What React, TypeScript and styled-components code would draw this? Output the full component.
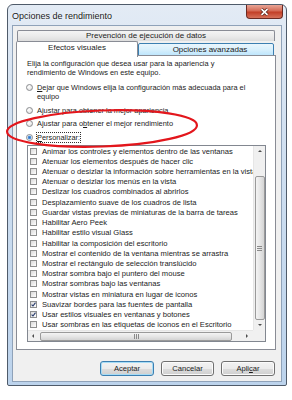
import React from "react";
import styled, { createGlobalStyle } from "styled-components";

const GlobalStyle = createGlobalStyle`
  body {
    margin: 0;
    background: #ffffff;
    font-family: "Liberation Sans", Arial, sans-serif;
    color: #1b1b1b;
  }
`;

const Page = styled.div`
  position: relative;
  width: 292px;
  height: 400px;
  box-sizing: border-box;
  padding: 4px 0 0 7px;
  overflow: hidden;
`;

const Window = styled.div`
  width: 280px;
  height: 382px;
  box-sizing: border-box;
  border: 1px solid #4f5b6a;
  border-radius: 6px 6px 2px 2px;
  background: linear-gradient(180deg, #e3ebf5 0%, #d3e1f1 30%, #bcd3ec 100%);
  display: flex;
  flex-direction: column;
  padding: 0 4px 3px 4px;
`;

const TitleBar = styled.div`
  height: 20px;
  display: flex;
  align-items: flex-start;
  margin: 0 -4px;
  padding: 0 3px 0 4px;
`;

const Title = styled.span`
  font-size: 9px;
  margin-top: 6px;
  color: #1a1a1a;
  text-shadow: 0 0 3px #ffffff;
`;

const CloseButton = styled.div`
  margin-left: auto;
  width: 37px;
  height: 14px;
  box-sizing: border-box;
  border: 1px solid #6b2a22;
  border-top: none;
  border-radius: 0 0 4px 4px;
  background: linear-gradient(180deg, #e8a596 0%, #d46a55 45%, #c23f27 55%, #d6715a 100%);
  display: flex;
  align-items: center;
  justify-content: center;
`;

const Client = styled.div`
  flex: 1;
  background: #f0f0f0;
  border: 1px solid #8fa2b9;
  display: flex;
  flex-direction: column;
  padding: 4px 5px 5px 3px;
`;

const TopTab = styled.div`
  height: 11px;
  margin: 0 1px;
  box-sizing: border-box;
  border: 1px solid #898c95;
  border-bottom: none;
  border-radius: 2px 2px 0 0;
  background: linear-gradient(180deg, #f4f4f4 0%, #ebebeb 50%, #dddddd 100%);
  font-size: 8px;
  line-height: 10px;
  text-align: center;
`;

const TabRow = styled.div`
  height: 15px;
  display: flex;
  align-items: flex-end;
`;

const Tab = styled.div<{ $selected?: boolean }>`
  position: relative;
  z-index: ${(p) => (p.$selected ? 2 : 1)};
  box-sizing: border-box;
  width: ${(p) => (p.$selected ? "122px" : "136px")};
  height: ${(p) => (p.$selected ? "16px" : "13px")};
  margin-bottom: ${(p) => (p.$selected ? "-1px" : "0")};
  border: 1px solid ${(p) => (p.$selected ? "#898c95" : "#3c7fb1")};
  border-bottom: ${(p) => (p.$selected ? "none" : "1px solid #3c7fb1")};
  border-radius: 2px 2px 0 0;
  background: ${(p) =>
    p.$selected
      ? "#ffffff"
      : "linear-gradient(180deg, #eaf6fd 0%, #d9f0fc 50%, #bee6fd 100%)"};
  font-size: 8px;
  line-height: 11px;
  text-align: center;
  padding-left: ${(p) => (p.$selected ? "0" : "8px")};
`;

const Panel = styled.div`
  position: relative;
  z-index: 1;
  margin-top: -1px;
  flex: 1;
  background: #ffffff;
  border: 1px solid #898c95;
  padding: 3px 9px 0 10px;
  display: flex;
  flex-direction: column;
  font-size: 7.4px;
`;

const Description = styled.p`
  margin: 0;
  line-height: 9px;
`;

const RadioGroup = styled.div`
  margin-top: 6px;
  display: flex;
  flex-direction: column;
  gap: 4.5px;
`;

const RadioRow = styled.div`
  display: flex;
  align-items: flex-start;
  line-height: 9px;
  margin-left: -1px;
`;

const RadioCircle = styled.span<{ $checked?: boolean }>`
  flex: none;
  width: 7px;
  height: 7px;
  margin-top: 1px;
  margin-right: 4px;
  box-sizing: border-box;
  border-radius: 50%;
  border: 1px solid #8a8c8f;
  background: ${(p) =>
    p.$checked
      ? "radial-gradient(circle, #2e6fc4 0, #5a9be0 1.6px, #eef2f7 2.2px, #dcdfe3 100%)"
      : "radial-gradient(circle at 35% 35%, #ffffff 0, #eaeaea 60%, #d2d2d2 100%)"};
`;

const Focus = styled.span`
  outline: 1px dotted #333333;
  outline-offset: 0;
`;

const ListBox = styled.div`
  margin-top: 3.5px;
  height: 197px;
  box-sizing: border-box;
  border: 1px solid #828790;
  background: #ffffff;
  display: grid;
  grid-template-columns: 1fr 12px;
  grid-template-rows: 184px 11px;
`;

const Items = styled.div`
  overflow: hidden;
  white-space: nowrap;
  font-size: 7.6px;
`;

const ItemRow = styled.div`
  height: 10.22px;
  display: flex;
  align-items: center;
  padding-left: 2px;
`;

const CheckBox = styled.span`
  flex: none;
  width: 7px;
  height: 7px;
  margin-right: 5px;
  box-sizing: border-box;
  border: 1px solid #8e8f8f;
  background: linear-gradient(135deg, #d9d9d9 0%, #f4f4f4 70%, #ffffff 100%);
  display: flex;
  align-items: center;
  justify-content: center;
`;

const VScroll = styled.div`
  background: #f0f0f0;
  border-left: 1px solid #e6e6e6;
  display: flex;
  flex-direction: column;
  align-items: center;
`;

const HScroll = styled.div`
  background: #f0f0f0;
  border-top: 1px solid #e6e6e6;
  display: flex;
  align-items: center;
`;

const Corner = styled.div`
  background: #f0f0f0;
`;

const ArrowButton = styled.div<{ $size: string }>`
  flex: none;
  ${(p) => p.$size}
  display: flex;
  align-items: center;
  justify-content: center;
`;

const VThumb = styled.div`
  width: 10px;
  height: 144px;
  margin-top: 20px;
  box-sizing: border-box;
  border: 1px solid #9a9a9a;
  border-radius: 2px;
  background: linear-gradient(90deg, #f4f4f4 0%, #e6e6e6 50%, #d4d4d4 100%);
  display: flex;
  align-items: center;
  justify-content: center;
`;

const HThumb = styled.div`
  width: 192px;
  height: 9px;
  margin-left: 2px;
  box-sizing: border-box;
  border: 1px solid #9a9a9a;
  border-radius: 2px;
  background: linear-gradient(180deg, #f4f4f4 0%, #e6e6e6 50%, #d4d4d4 100%);
  display: flex;
  align-items: center;
  justify-content: center;
`;

const ButtonRow = styled.div`
  display: flex;
  justify-content: flex-end;
  gap: 7px;
  margin-top: 11px;
  padding-right: 1px;
`;

const DialogButton = styled.div<{ $default?: boolean; $w: number }>`
  width: ${(p) => p.$w}px;
  height: 15px;
  box-sizing: border-box;
  border: 1px solid ${(p) => (p.$default ? "#3c7fb1" : "#707070")};
  border-radius: 3px;
  box-shadow: ${(p) => (p.$default ? "inset 0 0 0 1px #a6dcf6" : "inset 0 0 0 1px #fbfbfb")};
  background: linear-gradient(180deg, #f2f2f2 0%, #ebebeb 50%, #dddddd 51%, #cfcfcf 100%);
  font-size: 7.6px;
  line-height: 13px;
  text-align: center;
`;

const Ellipse = styled.svg`
  position: absolute;
  z-index: 5;
  left: 0;
  top: 104px;
  pointer-events: none;
`;

const items: [string, boolean][] = [
  ["Animar los controles y elementos dentro de las ventanas", false],
  ["Atenuar los elementos después de hacer clic", false],
  ["Atenuar o desizlar la información sobre herramientas en la vista", false],
  ["Atenuar o desizlar los menús en la vista", false],
  ["Deslizar los cuadros combinados al abrirlos", false],
  ["Desplazamiento suave de los cuadros de lista", false],
  ["Guardar vistas previas de miniaturas de la barra de tareas", false],
  ["Habilitar Aero Peek", false],
  ["Habilitar estilo visual Glass", false],
  ["Habilitar la composición del escritorio", false],
  ["Mostrar el contenido de la ventana mientras se arrastra", false],
  ["Mostrar el rectángulo de selección translúcido", false],
  ["Mostrar sombra bajo el puntero del mouse", false],
  ["Mostrar sombras bajo las ventanas", false],
  ["Mostrar vistas en miniatura en lugar de iconos", false],
  ["Suavizar bordes para las fuentes de pantalla", true],
  ["Usar estilos visuales en ventanas y botones", true],
  ["Usar sombras en las etiquetas de iconos en el Escritorio", false],
];

const Arrow = ({ dir }: { dir: "up" | "down" | "left" | "right" }) => {
  const pts = {
    up: "0,3 2,1 4,3",
    down: "0,1 2,3 4,1",
    left: "3,0 1,2 3,4",
    right: "1,0 3,2 1,4",
  }[dir];
  return (
    <svg width="4" height="4" viewBox="0 0 4 4">
      <polygon points={pts} fill="#4d4d4d" />
    </svg>
  );
};

const App = () => {
  return (
    <Page>
      <GlobalStyle />
      <Window>
        <TitleBar>
          <Title>Opciones de rendimiento</Title>
          <CloseButton>
            <svg width="11" height="8" viewBox="0 0 11 8">
              <path d="M2.5 1.2 L8.5 6.8 M8.5 1.2 L2.5 6.8" stroke="#4a1810" strokeWidth="3.2" />
              <path d="M2.5 1.2 L8.5 6.8 M8.5 1.2 L2.5 6.8" stroke="#ffffff" strokeWidth="1.8" />
            </svg>
          </CloseButton>
        </TitleBar>
        <Client>
          <TopTab>Prevención de ejecución de datos</TopTab>
          <TabRow>
            <Tab $selected>Efectos visuales</Tab>
            <Tab>Opciones avanzadas</Tab>
          </TabRow>
          <Panel>
            <Description>
              Elija la configuración que desea usar para la apariencia y
              <br />
              rendimiento de Windows en este equipo.
            </Description>
            <RadioGroup>
              <RadioRow>
                <RadioCircle />
                <span>
                  <u>D</u>ejar que Windows elija la configuración más adecuada para el
                  <br />
                  equipo
                </span>
              </RadioRow>
              <RadioRow>
                <RadioCircle />
                <span>Ajustar para obtener la mejor apariencia</span>
              </RadioRow>
              <RadioRow>
                <RadioCircle />
                <span>
                  Ajustar para o<u>b</u>tener el mejor rendimiento
                </span>
              </RadioRow>
              <RadioRow>
                <RadioCircle $checked />
                <Focus>
                  <u>P</u>ersonalizar:
                </Focus>
              </RadioRow>
            </RadioGroup>
            <ListBox>
              <Items>
                {items.map(([label, checked]) => (
                  <ItemRow key={label}>
                    <CheckBox>
                      {checked && (
                        <svg width="5" height="5" viewBox="0 0 5 5">
                          <path d="M0.6 2.6 L2 4 L4.5 0.6" stroke="#24386b" strokeWidth="1.1" fill="none" />
                        </svg>
                      )}
                    </CheckBox>
                    <span>{label}</span>
                  </ItemRow>
                ))}
              </Items>
              <VScroll>
                <ArrowButton $size="height: 10px; width: 12px;">
                  <Arrow dir="up" />
                </ArrowButton>
                <VThumb>
                  <svg width="5" height="5" viewBox="0 0 5 5">
                    <path d="M0 0.5 H5 M0 2.5 H5 M0 4.5 H5" stroke="#8a8a8a" strokeWidth="1" />
                  </svg>
                </VThumb>
                <ArrowButton $size="height: 10px; width: 12px;">
                  <Arrow dir="down" />
                </ArrowButton>
              </VScroll>
              <HScroll>
                <ArrowButton $size="width: 10px; height: 11px;">
                  <Arrow dir="left" />
                </ArrowButton>
                <HThumb>
                  <svg width="5" height="5" viewBox="0 0 5 5">
                    <path d="M0.5 0 V5 M2.5 0 V5 M4.5 0 V5" stroke="#8a8a8a" strokeWidth="1" />
                  </svg>
                </HThumb>
                <ArrowButton $size="margin-left: auto; width: 13px; height: 11px;">
                  <Arrow dir="right" />
                </ArrowButton>
              </HScroll>
              <Corner />
            </ListBox>
          </Panel>
          <ButtonRow>
            <DialogButton $default $w={54}>
              Aceptar
            </DialogButton>
            <DialogButton $w={53}>Cancelar</DialogButton>
            <DialogButton $w={54}>
              Apli<u>c</u>ar
            </DialogButton>
          </ButtonRow>
        </Client>
      </Window>
      <Ellipse width="210" height="50" viewBox="0 0 210 50">
        <ellipse
          cx="102"
          cy="24.5"
          rx="95"
          ry="18"
          transform="rotate(-2 102 24.5)"
          fill="none"
          stroke="#e3161c"
          strokeWidth="2.2"
        />
      </Ellipse>
    </Page>
  );
};

export default App;
